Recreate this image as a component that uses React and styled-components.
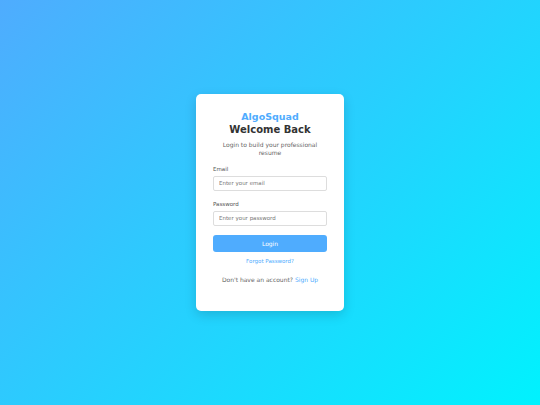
import React from 'react';
import styled, { createGlobalStyle } from 'styled-components';

const GlobalStyle = createGlobalStyle`
  html, body {
    margin: 0;
    padding: 0;
  }
  body {
    font-family: 'DejaVu Sans', Verdana, sans-serif;
  }
  * {
    box-sizing: border-box;
  }
`;

export default function App() {
  return (
    <>
      <GlobalStyle />
      <Page>
        <Card>
          <Brand>AlgoSquad</Brand>
          <Title>Welcome Back</Title>
          <Subtitle>Login to build your professional resume</Subtitle>
          <Form onSubmit={(e) => e.preventDefault()}>
            <FieldGroup>
              <Label htmlFor="email">Email</Label>
              <Input id="email" type="email" placeholder="Enter your email" />
            </FieldGroup>
            <FieldGroup spaced>
              <Label htmlFor="password">Password</Label>
              <Input id="password" type="password" placeholder="Enter your password" />
            </FieldGroup>
            <SubmitButton type="submit">Login</SubmitButton>
          </Form>
          <ForgotLink href="#">Forgot Password?</ForgotLink>
          <Footer>
            Don't have an account? <FooterLink href="#">Sign Up</FooterLink>
          </Footer>
        </Card>
      </Page>
    </>
  );
}

const Page = styled.div`
  min-height: 100vh;
  display: flex;
  align-items: center;
  justify-content: center;
  background: linear-gradient(135deg, #4facfe 0%, #00f2fe 100%);
`;

const Card = styled.div`
  width: 148px;
  padding: 17px 17px 27px;
  background: #ffffff;
  border-radius: 5px;
  box-shadow: 0 4px 12px rgba(0, 0, 0, 0.15);
  display: flex;
  flex-direction: column;
  align-items: stretch;
  text-align: center;
`;

const Brand = styled.div`
  font-size: 9.5px;
  line-height: 11px;
  font-weight: bold;
  color: #4facfe;
`;

const Title = styled.h1`
  margin: 2px 0 0;
  font-size: 10px;
  line-height: 12px;
  font-weight: bold;
  color: #333333;
`;

const Subtitle = styled.p`
  margin: 5px 0 0;
  font-size: 6px;
  line-height: 8px;
  color: #666666;
`;

const Form = styled.form`
  margin-top: 9px;
  display: flex;
  flex-direction: column;
  text-align: left;
`;

const FieldGroup = styled.div`
  display: flex;
  flex-direction: column;
  margin-top: ${(p) => (p.spaced ? '10.5px' : '0')};
`;

const Label = styled.label`
  font-size: 5.5px;
  line-height: 7px;
  color: #555555;
  margin-bottom: 2.5px;
`;

const Input = styled.input`
  width: 100%;
  height: 15px;
  padding: 0 5px;
  border: 1px solid #dddddd;
  border-radius: 2px;
  font-family: inherit;
  font-size: 5.5px;
  color: #333333;
  outline: none;

  &::placeholder {
    color: #777777;
  }
`;

const SubmitButton = styled.button`
  margin-top: 9px;
  height: 17px;
  border: 0;
  border-radius: 3px;
  background: #4facfe;
  color: #ffffff;
  font-family: inherit;
  font-size: 6px;
  cursor: pointer;
`;

const ForgotLink = styled.a`
  margin-top: 6.5px;
  font-size: 5.5px;
  line-height: 7px;
  color: #4facfe;
  text-decoration: none;
`;

const Footer = styled.div`
  margin-top: 10.5px;
  font-size: 6px;
  line-height: 8px;
  color: #666666;
`;

const FooterLink = styled.a`
  color: #4facfe;
  text-decoration: none;
`;
